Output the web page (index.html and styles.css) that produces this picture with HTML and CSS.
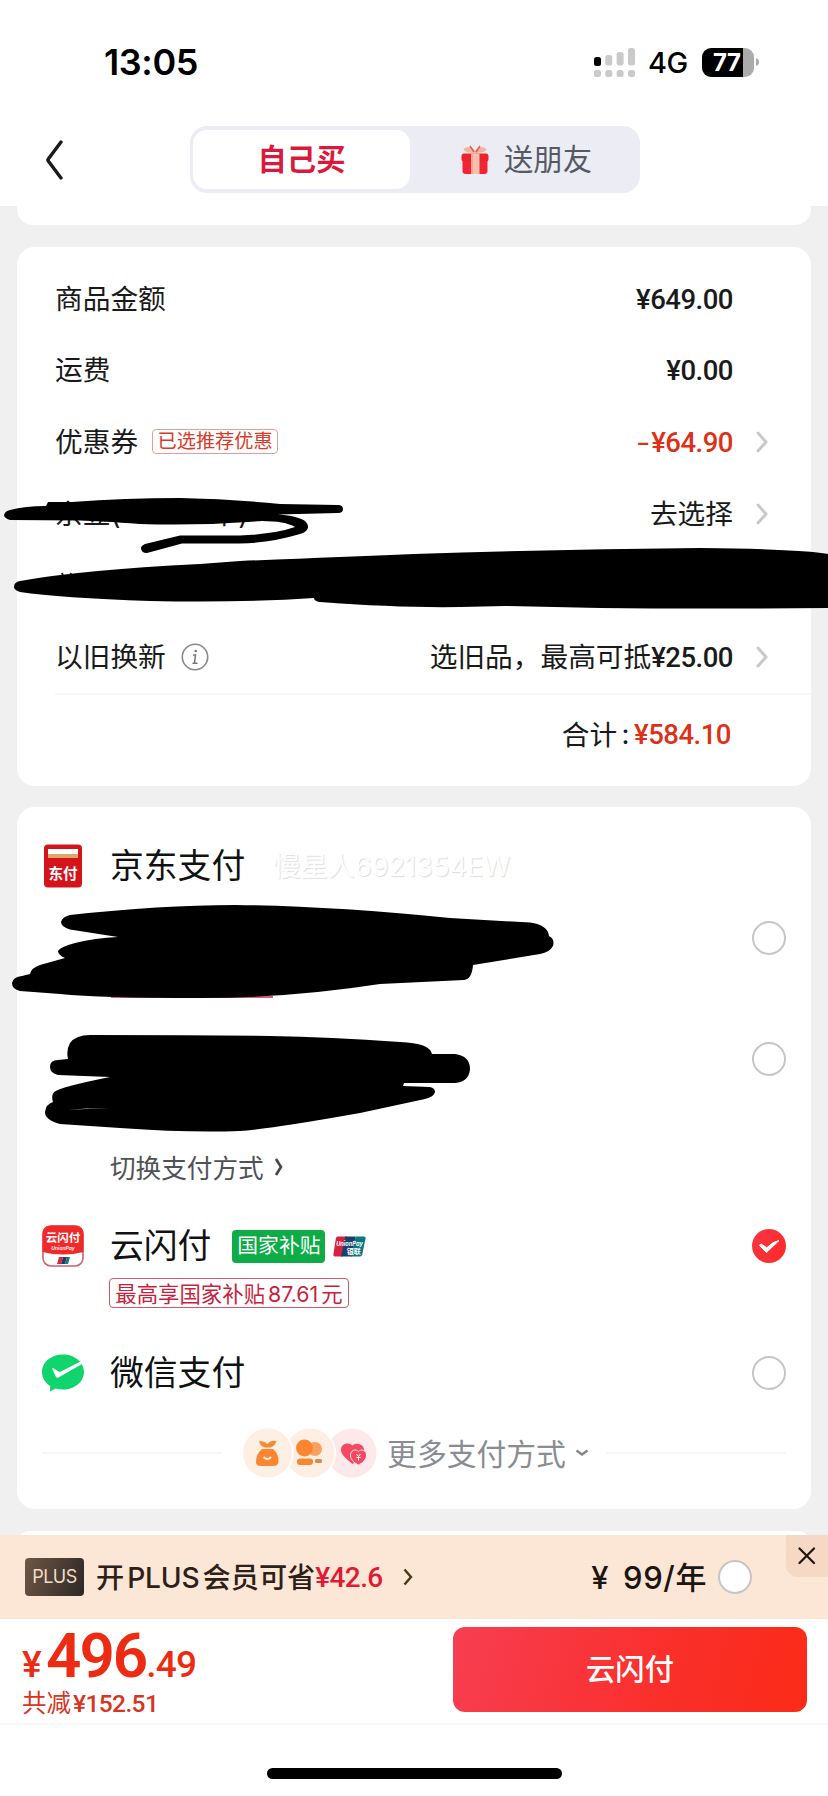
FILE: index.html
```html
<!DOCTYPE html>
<html lang="zh-CN">
<head>
<meta charset="utf-8">
<title>结算</title>
<link rel="stylesheet" href="styles.css">
</head>
<body>
<div class="screen">
  <header class="top">
    <div class="status">
      <span class="clock">13:05</span>
      <div class="status-right">
        <svg class="signal" width="41" height="29" viewBox="0 0 41 29">
          <rect x="0" y="9" width="7" height="9" rx="2.5" fill="#000"/>
          <g fill="#cacaca"><rect x="11.3" y="7" width="7" height="10.5" rx="2.5"/><rect x="22.6" y="4" width="7" height="13.5" rx="2.5"/><rect x="34" y="0" width="7" height="17.5" rx="2.5"/>
          <rect x="0" y="22" width="7" height="7" rx="2.5"/><rect x="11.3" y="22" width="7" height="7" rx="2.5"/><rect x="22.6" y="22" width="7" height="7" rx="2.5"/><rect x="34" y="22" width="7" height="7" rx="2.5"/></g>
        </svg>
        <span class="net">4G</span>
        <div class="battery"><span class="battery-num">77</span></div>
        <svg width="3" height="8" viewBox="0 0 3 8"><path d="M0 0Q3 1 3 4T0 8Z" fill="#aaa"/></svg>
      </div>
    </div>
    <div class="nav">
      <svg class="back" width="18" height="40" viewBox="0 0 18 40"><path d="M16 2L3.300 19Q2.500 20 3.300 21L16 38" fill="none" stroke="#1a1a1a" stroke-width="3.400" stroke-linecap="round"/></svg>
      <div class="segment">
        <div class="seg active"><span>自己买</span></div>
        <div class="seg">
          <svg width="28" height="30" viewBox="0 0 28 30">
            <path d="M14 8C8 8 3 7 2.500 4C6 1 11 1 14 6C17 1 22 1 25.500 4C25 7 20 8 14 8Z" fill="#f3b49f"/>
            <path d="M13 7L9 1M15 7L19 1" stroke="#e0604e" stroke-width="1.500"/>
            <rect x="1.500" y="14" width="25" height="15" rx="3" fill="#f22536"/>
            <rect x="0.500" y="8.500" width="27" height="8" rx="2.500" fill="#e9242f"/>
            <rect x="10" y="8.500" width="8.500" height="20.500" fill="#f7bfae"/>
            <path d="M11 9V29" stroke="#e88f7d" stroke-width="1"/>
          </svg>
          <span>送朋友</span>
        </div>
      </div>
    </div>
  </header>
  <div class="card card-tail"></div>

  <section class="card summary">
    <div class="row"><span class="label">商品金额</span><span class="val num">¥649.00</span></div>
    <div class="row"><span class="label">运费</span><span class="val num">¥0.00</span></div>
    <div class="row"><span class="label">优惠券</span><span class="tag">已选推荐优惠</span><span class="val num red"><span class="dash">−</span>¥64.90</span><svg class="chev" width="12" height="22" viewBox="0 0 12 22"><path d="M2 2L10 11L2 20"/></svg></div>
    <div class="row"><span class="label">京豆(<span class="gap"></span>中)</span><span class="val label">去选择</span><svg class="chev" width="12" height="22" viewBox="0 0 12 22"><path d="M2 2L10 11L2 20"/></svg></div>
    <div class="row"><svg width="30" height="28" viewBox="0 0 30 28"><path d="M7 2L9 8M16 2L14 8" stroke="#1a1a1a" stroke-width="2"/></svg></div>
    <div class="row"><span class="label">以旧换新</span>
      <svg class="info" width="28" height="28" viewBox="0 0 28 28"><circle cx="14" cy="14" r="12.700" fill="none" stroke="#888" stroke-width="1.600"/><path d="M12 12H14.500L13.500 20M11.500 20.300H16.500" fill="none" stroke="#777" stroke-width="1.500"/><circle cx="14.700" cy="8" r="1.300" fill="#777"/></svg>
      <span class="val label">选旧品，最高可抵<span class="num">¥25.00</span></span><svg class="chev" width="12" height="22" viewBox="0 0 12 22"><path d="M2 2L10 11L2 20"/></svg></div>
    <div class="total"><span class="label">合计</span><span class="colon">:</span><span class="num red">¥584.10</span></div>
  </section>

  <section class="card pay">
    <div class="method jd">
      <span class="ico"><svg width="40" height="44" viewBox="0 0 40 44"><rect x="1" y="0.500" width="38" height="43" rx="4" fill="#d4141b"/><rect x="5" y="5" width="30" height="5" fill="#fff"/><rect x="5" y="10" width="30" height="4" fill="#dfa56b"/><text x="20" y="35" text-anchor="middle" class="jd-text">东付</text></svg></span>
      <span class="name">京东支付</span><span class="mark">慢星人6921354EW</span>
    </div>
    <div class="method bank-a"><i class="radio"></i></div>
    <div class="method bank-b"><i class="radio"></i></div>
    <div class="switch"><span>切换支付方式</span><svg width="10" height="20" viewBox="0 0 10 20"><path d="M2 2L7 10L2 18" fill="none" stroke="#44464b" stroke-width="2.600"/></svg></div>
    <div class="method quick">
      <span class="ico"><svg width="42" height="42" viewBox="0 0 42 42"><rect x="1" y="1" width="40" height="40" rx="8" fill="#fff" stroke="#d0606e" stroke-width="1.600"/><path d="M0.500 27V9Q0.500 0.500 9 0.500H33Q41.500 0.500 41.500 9V27Q21 32 0.500 27Z" fill="#f02a2a"/><text x="21" y="17" text-anchor="middle" class="ysf-text">云闪付</text><text x="21" y="25" text-anchor="middle" class="up-small">UnionPay</text><path d="M17 32H21L19 39H15Z" fill="#d52b45"/><path d="M21 32H25L23 39H19Z" fill="#1d3b66"/><path d="M25 32H28L26 39H23Z" fill="#16777c"/></svg></span>
      <span class="name">云闪付</span><span class="green">国家补贴</span>
      <svg class="union" width="33" height="21" viewBox="0 0 35 22"><path d="M5 .5H15L10 21.500H2Q0 21.500.4 19.500L3 2.500Q3.500.5 5 .5Z" fill="#d8213e"/><path d="M13 .5H24L20 21.500H8.500Z" fill="#17406f"/><path d="M24 .5H32.500Q35 .5 34.500 2.500L31 19.500Q30.500 21.500 28.500 21.500H19Z" fill="#0b7780"/><text x="17.500" y="11" text-anchor="middle" class="up-logo">UnionPay</text><text x="22" y="19" text-anchor="middle" class="up-cn">银联</text></svg>
      <i class="radio on"><svg width="34" height="34" viewBox="0 0 34 34"><path d="M7.500 16.500L14.500 23.500L27 11.500Q21 12.500 14.700 18.800L9.500 15.200Q7.800 15 7.500 16.500Z" fill="#fff" stroke="#fff" stroke-width="1" stroke-linejoin="round"/></svg></i>
    </div>
    <div class="subsidy"><span>最高享国家补贴</span><span class="sub-num">87.61</span><span>元</span></div>
    <div class="method wechat">
      <span class="ico"><svg width="42" height="38" viewBox="0 0 42 38"><path d="M21 .5C32.500 .5 42 8 42 18S32.500 35.500 21 35.500C18.500 35.500 16 35.200 13.800 34.500L8 37.500L8.200 32C3 28.700 0 23.700 0 18C0 8 9.500.5 21 .5Z" fill="#10d46c"/><path d="M11 14Q10 14.500 10.500 15.800L14 23Q15 24.500 16.800 23.300L41 9.500L39.500 7L19 17.500Q17.500 18.200 16.300 17.400Z" fill="#fff"/></svg></span>
      <span class="name">微信支付</span><i class="radio"></i>
    </div>
    <div class="more">
      <i class="line"></i>
      <svg class="bubbles" width="134" height="50" viewBox="0 0 134 50">
        <circle cx="109" cy="25" r="24.500" fill="#fde8ea"/><circle cx="67" cy="25" r="26" fill="#fff"/><circle cx="67" cy="25" r="24.500" fill="#feefe4"/><circle cx="24.500" cy="25" r="26" fill="#fff"/><circle cx="24.500" cy="25" r="24.500" fill="#feefe4"/>
        <path d="M16 13Q21 13 24.500 16Q28 12 33.500 13Q32 18 27.500 19.500H21.500Q17 18 16 13Z" fill="#f68b31"/><path d="M19 21H30Q36 26 35.500 34Q35 38 30 38H18Q13 38 13 34Q13 26 19 21Z" fill="#fb8530"/><path d="M20.500 29Q24.500 33 28 29" fill="none" stroke="#feefe4" stroke-width="2"/>
        <circle cx="72" cy="21" r="7" fill="#f9a05f"/><circle cx="61.500" cy="20" r="8.500" fill="#fb8530"/><rect x="54" y="30.500" width="16" height="6.500" rx="3" fill="#fb8530"/><rect x="72" y="31" width="7" height="4" rx="1.500" fill="#dc8a4c"/>
        <path d="M109.500 17.500C112 15 117 15 120 18.500C123 23 120 29 109.500 36C102 30 97.500 25.500 98 21C98.500 15.500 106 13.500 109.500 17.500Z" fill="#f64861"/><path d="M115.500 23.500C118 20.500 124 22 123.500 28C123 32 119.500 35 115.500 37C111.500 35 108 32 107.500 28C107 22 113 20.500 115.500 23.500Z" fill="#f64861" stroke="#fde8ea" stroke-width="1"/><path d="M113.500 26L115.500 28.500L117.500 26M113.500 29.500H117.500M115.500 28.500V32.500" stroke="#fff" stroke-width="1" fill="none"/>
      </svg>
      <span class="more-text">更多支付方式</span>
      <svg class="down" width="14" height="8" viewBox="0 0 14 8"><path d="M1.500 1.500L7 5.500L12.500 1.500" fill="none" stroke="#80838b" stroke-width="2.400"/></svg>
      <i class="line"></i>
    </div>
  </section>

  <div class="card next"></div>

  <div class="plus">
    <span class="badge">PLUS</span>
    <span class="plus-text">开<span class="latin">PLUS</span>会员可省</span><span class="num save">¥42.6</span>
    <svg class="plus-chev" width="10" height="18" viewBox="0 0 10 18"><path d="M1.500 1.500L8 9L1.500 16.500" fill="none" stroke="#4c3510" stroke-width="2.400"/></svg>
    <span class="year">¥ 99/年</span><i class="radio"></i>
    <span class="close"><svg width="18" height="18" viewBox="0 0 18 18"><path d="M1.500 1.500L16 16M16 1.500L1.500 16" stroke="#20150c" stroke-width="2.200" stroke-linecap="round"/></svg></span>
  </div>
  <footer class="bar">
    <div class="price">
      <div class="amount"><span class="yen">¥</span><span class="big">496</span><span class="cents">.49</span></div>
      <div class="saved">共减<span class="saved-num">¥152.51</span></div>
    </div>
    <button class="submit">云闪付</button>
  </footer>
  <div class="home"><i></i></div>

  <svg class="ink" width="828" height="660" viewBox="0 490 828 660">
    <path d="M10 510Q25 506 46 506L48 502L72 502Q125 498 180 498Q230 499 280 504L338 505Q343 505 343 509T338 513L278 514.500Q300 516 306 522Q312 530 300 534Q270 543 240 543.500L182 543.500L147 553Q141 553 141 548Q141 546 145 544L180 535.500L240 535.500Q275 534 295 527Q285 521 262 521Q200 526 140 524Q100 521 80 520.500L10 520Q4 518 4 515Q5 511 10 510Z"/>
    <path d="M20 581Q80 570 200 564L240 561Q340 557 414 554Q560 549 700 548Q800 549 828 554V608Q700 609 600 608L505 606L460 607Q400 608 320 602Q314 601 314 598Q240 603 150 601Q60 598 20 592Q14 590 14 587Q14 582 20 581Z"/>
    <path d="M111 997H273" stroke="#d0254a" stroke-width="1.500"/>
    <path d="M70 915Q160 905 235 905Q330 906 450 918L530 922.500Q548 925 549 936Q555 939 553 946Q550 952 540 954L473 965Q472 979 464 980L380 984Q290 998 200 998Q100 998 60 994L20 991Q12 989 12 983Q13 977 22 976L30 974Q31 968 40 965L65 958Q58 955 58 951Q60 947 75 943Q95 938 118 937L70 929.500Q61 927 61 922Q62 917 70 915Z"/>
    <path d="M90 1035Q200 1035 270 1036Q330 1037 400 1042Q430 1043 432 1054H455Q470 1056 470 1069Q469 1082 455 1083H404L403 1086L430 1087Q435 1088 435 1092Q434 1097 425 1099L360 1113Q270 1129 240 1131Q190 1133 120 1128L60 1124Q45 1120 45 1112Q46 1104 53 1102Q51 1096 54 1092Q60 1087 110 1077L58 1075Q50 1073 50 1067Q50 1060 58 1060L68 1059Q66 1050 70 1043Q76 1035 90 1035Z"/>
    <path d="M68 1110Q85 1108 110 1108Q90 1108.500 68 1110Z" fill="#fff"/>
  </svg>
</div>
</body>
</html>
```
FILE: styles.css
```css
* { box-sizing: border-box; }
body { margin: 0; background: #f0f0f1; color: #1a1a1a; font-family: Inter, "Noto Sans CJK SC", sans-serif; }
svg { display: block; flex: none; }
i { display: block; flex: none; }
.screen { position: relative; width: 828px; height: 1796px; overflow: hidden; display: flex; flex-direction: column; }
.screen > * { flex: none; }

.top { height: 206px; background: #fff; }
.status { height: 126px; padding: 0 69px 2px 104px; display: flex; align-items: center; justify-content: space-between; color: #000; }
.clock { font-size: 36px; font-weight: 600; letter-spacing: -0.4px; }
.status-right { display: flex; align-items: center; }
.net { margin-left: 13px; width: 54px; font-size: 29px; font-weight: 500; letter-spacing: -0.5px; }
.battery { width: 52px; height: 29px; margin-right: 2px; border-radius: 9px; background: linear-gradient(90deg, #000 0 41px, #ababab 41px); display: flex; align-items: center; padding-left: 11px; }
.battery-num { color: #fff; font-size: 24px; font-weight: 700; letter-spacing: -0.5px; }
.nav { display: flex; align-items: center; height: 67px; padding-left: 45px; }
.segment { width: 450px; height: 67px; margin-left: 127px; padding: 4px 4px 4px 3px; border-radius: 17px; background: #ecedf4; display: flex; }
.seg { flex: 1; display: flex; align-items: center; justify-content: center; gap: 15px; font-size: 29.3px; color: #565965; padding-left: 7px; }
.seg span { padding-bottom: 5px; }
.seg.active { flex: none; width: 217px; padding: 0; background: #fff; border-radius: 14px; color: #d91a3c; font-weight: 700; }

.card { margin: 0 17px; background: #fff; border-radius: 18px; }
.card-tail { height: 19px; border-radius: 0 0 16px 16px; }

.summary { height: 539px; margin-top: 22px; padding: 16px 0 0 38px; font-size: 27.7px; }
.row { height: 71.6px; display: flex; align-items: center; padding-right: 78px; white-space: nowrap; }
.row > * { flex: none; }
.label { padding-bottom: 4px; }
.val { margin-left: auto; }
.num { font-family: Roboto, sans-serif; font-weight: 500; letter-spacing: -0.5px; font-size: 27.500px; }
.row > .num { padding-top: 1px; }
.red { color: #dd3019; }
.dash { margin-right: 2px; font-size: 24px; }
.tag { margin-left: 14px; width: 126px; height: 25px; border: 1.300px solid #e0a09a; border-radius: 4px; color: #d63a28; font-size: 19.2px; line-height: 22px; text-align: center; }
.chev { margin: 0 -35px 0 23px; fill: none; stroke: #c9c9cb; stroke-width: 3; stroke-linecap: round; stroke-linejoin: round; }
.gap { display: inline-block; width: 90px; }
.info { margin-left: 15px; }
.total { height: 81px; border-top: 2px solid #f7f7f7; display: flex; align-items: center; justify-content: flex-end; padding-right: 80px; }
.total .label { padding-bottom: 3px; }
.colon { width: 17px; text-align: center; }

.pay { height: 702px; margin-top: 21px; padding: 24px 25px 0; }
.method { display: flex; align-items: center; }
.method .radio { margin-left: auto; }
.ico { width: 42px; display: flex; justify-content: center; }
.name { margin-left: 26px; font-size: 33.8px; color: #111; line-height: 48px; }
.mark { margin-left: 28px; padding-bottom: 4px; font-size: 27.200px; color: #fff; text-shadow: 1px 1px 1px #ddd; letter-spacing: 0; }
.radio { width: 34px; height: 34px; border-radius: 50%; border: 2px solid #c6c6c8; background: #fff; }
.radio.on { border: 0; background: linear-gradient(120deg, #fb3446, #fc2b24); }
.jd { height: 70px; }
.bank-a { height: 74px; }
.bank-b { height: 168px; }
.switch { height: 48px; padding-left: 68px; display: flex; align-items: center; gap: 10px; color: #4f5257; font-size: 25.6px; }
.switch span { padding-bottom: 2px; }
.quick { height: 64px; margin-top: 23px; }
.green { margin-left: 21px; width: 93px; height: 33px; border-radius: 4px; background: #0eac47; color: #fff; font-size: 20.8px; line-height: 32px; text-align: center; }
.union { margin-left: 8px; }
.subsidy { width: 240px; height: 30px; margin-left: 67px; padding-bottom: 1px; border: 1.500px solid #d4566c; border-radius: 4px; color: #c91f3e; font-size: 21.4px; display: flex; align-items: center; justify-content: center; white-space: nowrap; }
.sub-num { margin: 0 3px; padding-top: 2px; }
.wechat { height: 50px; margin-top: 40px; }
.more { height: 50px; margin-top: 30px; display: flex; align-items: center; }
.line { flex: 1; height: 2px; background: #f6f6f7; }
.bubbles { margin: 0 10px 0 21px; }
.more-text { padding-bottom: 3px; font-size: 29.8px; color: #8a8c94; white-space: nowrap; }
.down { margin: 0 17px 0 9px; }
.next { height: 26px; margin-top: 22px; }

.plus { position: relative; height: 84px; margin-top: -22px; padding: 0 0 0 25px; background: #fce7d6; display: flex; align-items: center; color: #2d2018; white-space: nowrap; }
.badge { width: 59px; height: 38px; border-radius: 4px; background: linear-gradient(110deg, #6f5645, #2d2826); color: #f2dcc8; font-size: 18px; line-height: 38px; text-align: center; letter-spacing: -0.5px; }
.plus-text { margin-left: 12px; padding-bottom: 3px; font-size: 28.2px; font-weight: 500; }
.latin { margin: 0 3px; letter-spacing: -.2px; }
.save { color: #e01a32; font-size: 28px; letter-spacing: -0.6px; }
.plus-chev { margin-left: 20px; }
.year { margin-left: auto; padding-bottom: 4px; font-size: 31px; font-weight: 500; color: #1c1510; word-spacing: 5px; letter-spacing: .6px; }
.plus .radio { margin: 0 76px 0 11px; }
.close { position: absolute; top: 0; right: 0; width: 42px; height: 42px; background: #f5d9c4; border-radius: 0 0 0 12px; display: flex; align-items: center; justify-content: center; }

.bar { height: 106px; padding: 8px 21px 0 22px; background: #fff; border-bottom: 2px solid #f8f8f8; display: flex; justify-content: space-between; }
.price { color: #ed2a12; font-family: Roboto, "Noto Sans CJK SC", sans-serif; }
.amount { height: 58px; display: flex; align-items: baseline; line-height: 58px; font-weight: 500; }
.yen { font-size: 37px; width: 24px; }
.big { font-size: 62px; font-weight: 600; letter-spacing: -2px; }
.cents { font-size: 37px; letter-spacing: -0.8px; }
.saved { font-size: 24.500px; line-height: 38px; color: #d63524; }
.saved-num { font-weight: 500; margin-left: 2px; letter-spacing: -0.6px; }
.submit { width: 354px; height: 85px; border: 0; border-radius: 12px; background: linear-gradient(105deg, #f73e52, #fa2f2b 60%, #fc2b17); color: #fff; font: 500 29.3px "Noto Sans CJK SC", sans-serif; padding: 0 0 5px; }
.screen > .home { flex: 1; background: #fff; display: flex; justify-content: center; padding-top: 43px; }
.home i { width: 295px; height: 11px; border-radius: 6px; background: #000; }
.ink { position: absolute; left: 0; top: 490px; pointer-events: none; }

.jd-text { font: 700 14.500px "Noto Sans CJK SC", sans-serif; fill: #fff; }
.ysf-text { font: 700 11.500px "Noto Sans CJK SC", sans-serif; fill: #fff; }
.up-small { font: italic 600 5px Inter, sans-serif; fill: #fff; }
.up-logo { font: italic 700 6px Inter, sans-serif; fill: #fff; }
.up-cn { font: 700 7.500px "Noto Sans CJK SC", sans-serif; fill: #fff; }
```
